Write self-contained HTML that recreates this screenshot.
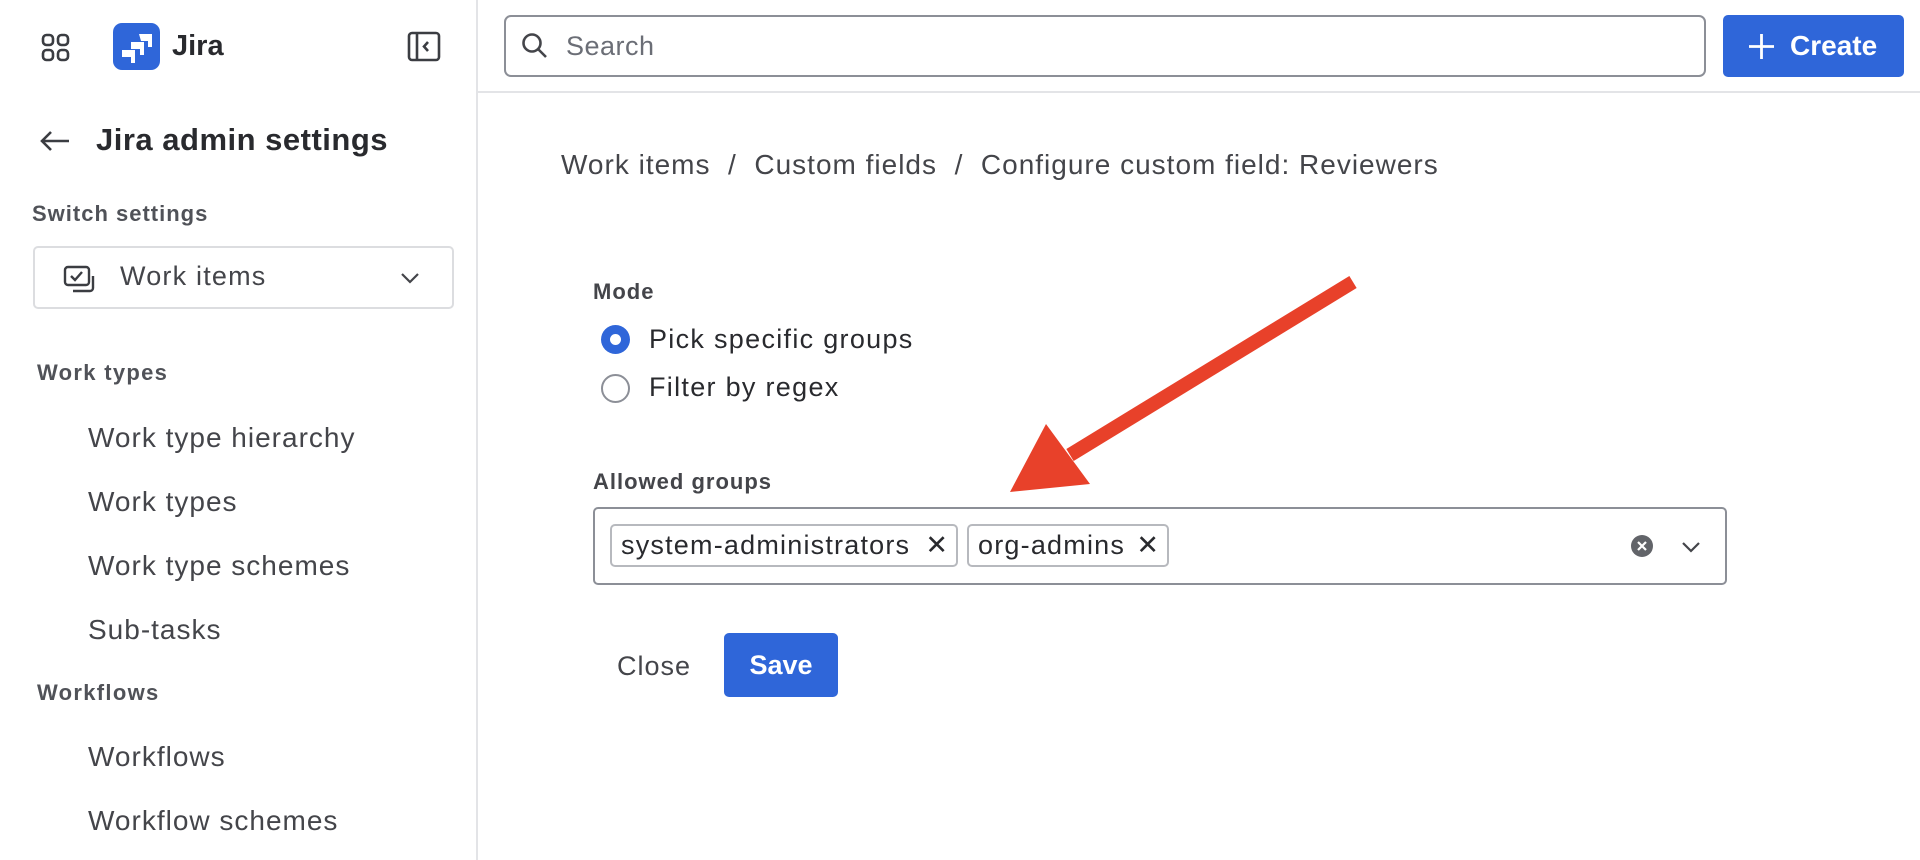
<!DOCTYPE html>
<html><head><meta charset="utf-8"><style>
*{box-sizing:border-box;margin:0;padding:0}
body{width:1920px;height:860px;overflow:hidden;background:#fff;font-family:"Liberation Sans",sans-serif;color:#292a2e;position:relative}
.a{position:absolute}
.side{left:0;top:0;width:478px;height:860px;border-right:2px solid #e3e4e7}
.top{left:478px;top:0;width:1442px;height:93px;border-bottom:2px solid #e3e4e7}
.nav{position:absolute;left:88px;font-size:28px;letter-spacing:1px;color:#44454a;transform:translateY(-50%)}
.h{position:absolute;font-size:22px;letter-spacing:1px;font-weight:bold;color:#505258;transform:translateY(-50%)}
.tag{position:absolute;top:524px;height:43px;border:2px solid #b7b9be;border-radius:5px;font-size:27px;letter-spacing:1.2px;line-height:39px;padding-left:9px;color:#292a2e}
</style></head><body>
<div class="a side">
 <svg class="a" style="left:41px;top:33px" width="30" height="30" viewBox="0 0 30 30" fill="none" stroke="#3b3d42" stroke-width="2.6"><rect x="2" y="2" width="10" height="10" rx="3.5"/><rect x="17" y="2" width="10" height="10" rx="3.5"/><rect x="2" y="17" width="10" height="10" rx="3.5"/><rect x="17" y="17" width="10" height="10" rx="3.5"/></svg>
 <div class="a" style="left:113px;top:23px;width:47px;height:47px;background:#2f66d9;border-radius:9px"></div>
 <svg class="a" style="left:113px;top:23px" width="47" height="47" viewBox="0 0 47 47" fill="#fff"><path d="M26 11h13v13h-4v-6l-7 0z"/><path d="M18 19h13v13h-4v-6h-9z"/><path d="M9 27h13v13h-4v-6H9z"/></svg>
 <div class="a" style="left:172px;top:30px;font-size:29px;font-weight:bold;color:#292a2e">Jira</div>
 <svg class="a" style="left:407px;top:31px" width="34" height="31" viewBox="0 0 34 31" fill="none" stroke="#3b3d42" stroke-width="2.6"><rect x="2" y="2" width="30" height="27" rx="3"/><path d="M10 2v27M21 11l-4 4.5 4 4.5"/></svg>
 <svg class="a" style="left:40px;top:130px" width="30" height="22" viewBox="0 0 30 22" fill="none" stroke="#3b3d42" stroke-width="2.6"><path d="M29 11H3M11 2L2 11l9 9"/></svg>
 <div class="a" style="left:96px;top:122px;font-size:31px;letter-spacing:0.5px;font-weight:bold;color:#292a2e">Jira admin settings</div>
 <div class="h" style="left:32px;top:214px">Switch settings</div>
 <div class="a" style="left:33px;top:246px;width:421px;height:63px;border:2px solid #dcdde0;border-radius:5px"></div>
 <svg class="a" style="left:63px;top:265px" width="34" height="28" viewBox="0 0 34 28" fill="none" stroke="#3b3d42" stroke-width="2.4"><rect x="2" y="2" width="24" height="18" rx="3"/><path d="M8 11l4 4 7-8M30 11v12a3 3 0 0 1-3 3H10"/></svg>
 <div class="a" style="left:120px;top:261px;font-size:27px;letter-spacing:1.2px;color:#44454a">Work items</div>
 <svg class="a" style="left:400px;top:272px" width="20" height="12" viewBox="0 0 20 12" fill="none" stroke="#44454a" stroke-width="2.2"><path d="M2 2l8 8 8-8"/></svg>
 <div class="h" style="left:37px;top:373px;letter-spacing:1.3px">Work types</div>
 <div class="nav" style="top:438px">Work type hierarchy</div>
 <div class="nav" style="top:502px">Work types</div>
 <div class="nav" style="top:566px">Work type schemes</div>
 <div class="nav" style="top:630px">Sub-tasks</div>
 <div class="h" style="left:37px;top:693px;letter-spacing:1.3px">Workflows</div>
 <div class="nav" style="top:757px">Workflows</div>
 <div class="nav" style="top:821px">Workflow schemes</div>
</div>
<div class="a top"></div>
<div class="a" style="left:504px;top:15px;width:1202px;height:62px;border:2px solid #8c8f97;border-radius:7px"></div>
<svg class="a" style="left:521px;top:32px" width="28" height="28" viewBox="0 0 28 28" fill="none" stroke="#44454a" stroke-width="2.6"><circle cx="11" cy="11" r="8.5"/><path d="M17 17l8 8"/></svg>
<div class="a" style="left:566px;top:31px;font-size:27px;letter-spacing:0.5px;color:#6b6e76">Search</div>
<div class="a" style="left:1723px;top:15px;width:181px;height:62px;background:#2f66d9;border-radius:5px"></div>
<svg class="a" style="left:1748px;top:33px" width="27" height="27" viewBox="0 0 27 27" stroke="#fff" stroke-width="2.8"><path d="M13.5 1v25M1 13.5h25"/></svg>
<div class="a" style="left:1790px;top:30px;font-size:28px;color:#fff;font-weight:bold">Create</div>
<div class="a" style="left:561px;top:149px;font-size:28px;letter-spacing:1px;color:#44454a">Work items &nbsp;/&nbsp; Custom fields &nbsp;/&nbsp; Configure custom field: Reviewers</div>
<div class="h" style="left:593px;top:292px;color:#44454a">Mode</div>
<div class="a" style="left:601px;top:325px;width:29px;height:29px;border-radius:50%;background:#2f66d9"></div>
<div class="a" style="left:610px;top:334px;width:11px;height:11px;border-radius:50%;background:#fff"></div>
<div class="a" style="left:649px;top:324px;font-size:27px;letter-spacing:1.3px;color:#292a2e">Pick specific groups</div>
<div class="a" style="left:601px;top:374px;width:29px;height:29px;border-radius:50%;border:2px solid #8c8f97"></div>
<div class="a" style="left:649px;top:372px;font-size:27px;letter-spacing:1.3px;color:#292a2e">Filter by regex</div>
<div class="h" style="left:593px;top:482px;color:#44454a">Allowed groups</div>
<div class="a" style="left:593px;top:507px;width:1134px;height:78px;border:2px solid #8c8f97;border-radius:5px"></div>
<div class="tag" style="left:610px;width:348px">system-administrators<span style="position:absolute;right:8px;letter-spacing:0">✕</span></div>
<div class="tag" style="left:967px;width:202px">org-admins<span style="position:absolute;right:8px;letter-spacing:0">✕</span></div>
<svg class="a" style="left:1630px;top:534px" width="24" height="24" viewBox="0 0 24 24"><circle cx="12" cy="12" r="11" fill="#626469"/><path d="M8 8l8 8M16 8l-8 8" stroke="#fff" stroke-width="2.2"/></svg>
<svg class="a" style="left:1681px;top:541px" width="20" height="12" viewBox="0 0 20 12" fill="none" stroke="#44454a" stroke-width="2.2"><path d="M2 2l8 8 8-8"/></svg>
<div class="a" style="left:617px;top:651px;font-size:27px;letter-spacing:1px;color:#44454a">Close</div>
<div class="a" style="left:724px;top:633px;width:114px;height:64px;background:#2f66d9;border-radius:5px;color:#fff;font-weight:bold;font-size:27px;text-align:center;line-height:64px">Save</div>
<svg class="a" style="left:0;top:0" width="1920" height="860" viewBox="0 0 1920 860"><path d="M1353 282L1070 455" stroke="#e8412a" stroke-width="14"/><path d="M1010 492L1046 424L1090 484Z" fill="#e8412a"/></svg>
</body></html>
